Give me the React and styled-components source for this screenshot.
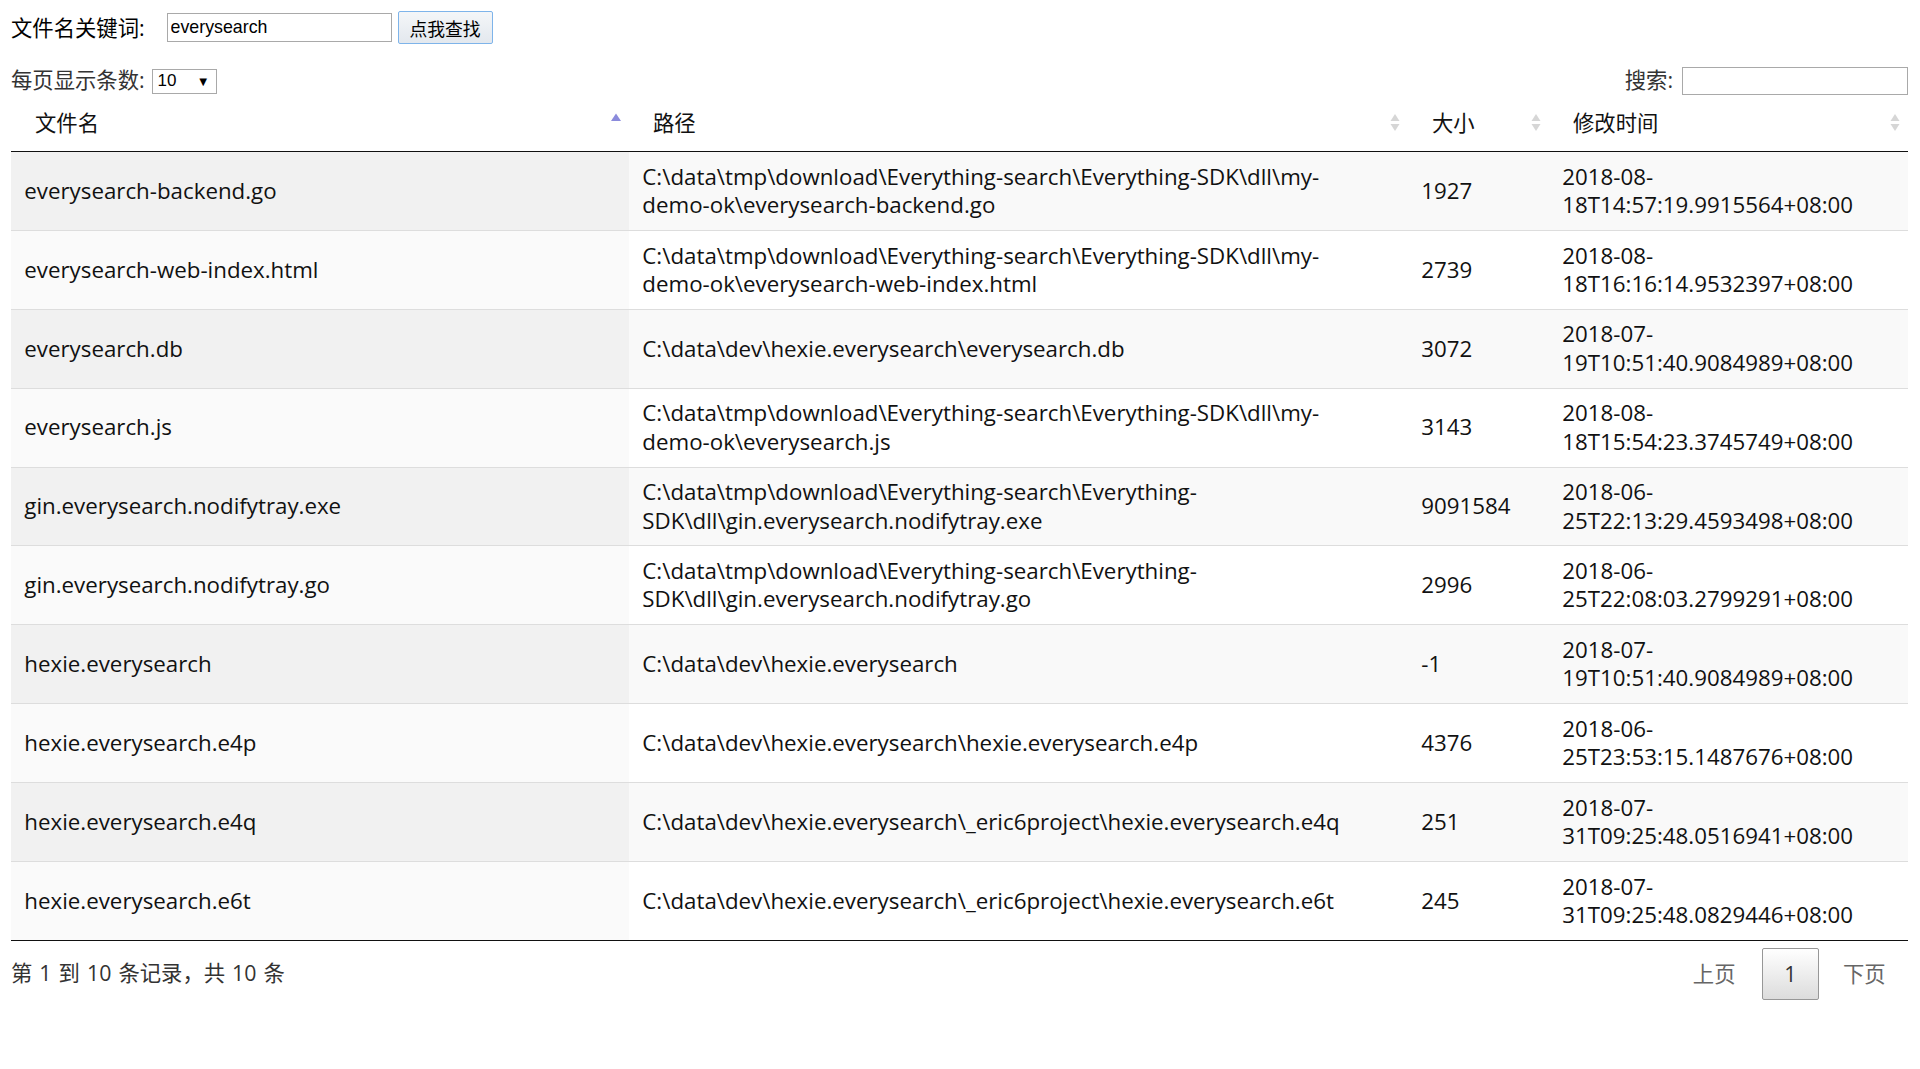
import React from "react";
import styled, { createGlobalStyle } from "styled-components";

const GlobalStyle = createGlobalStyle`
  body {
    margin: 0;
    background: #fff;
    font-family: "Open Sans", "Noto Sans CJK SC", sans-serif;
    color: #000;
  }
`;

const Page = styled.div`
  padding: 11px 12px 0 11px;
  font-size: 21.33px;
`;

const SearchBar = styled.form`
  display: flex;
  align-items: center;
  height: 33px;
`;

const Label = styled.span`
  line-height: 28px;
  color: #000;
`;

const KeywordInput = styled.input`
  box-sizing: border-box;
  width: 225px;
  height: 29px;
  margin-left: 22px;
  padding: 1px 3px;
  border: 1px solid #a9a9a9;
  font-family: "Liberation Sans", Arial, sans-serif;
  font-size: 17.8px;
  color: #000;
  outline: none;
`;

const FindButton = styled.button`
  box-sizing: border-box;
  width: 95px;
  height: 33px;
  margin-left: 6px;
  border: 1px solid #7eb4ea;
  border-radius: 2px;
  background: linear-gradient(#f4f6f8, #e3e8ee);
  font-family: "Noto Sans CJK SC", sans-serif;
  font-size: 17.8px;
  color: #000;
  padding: 0;
`;

const Toolbar = styled.div`
  display: flex;
  justify-content: space-between;
  align-items: center;
  height: 30px;
  margin-top: 22px;
  color: #333;
`;

const Group = styled.label`
  display: flex;
  align-items: center;
`;

const Caption = styled.span`
  padding-bottom: 5px;
`;

const LengthSelect = styled.div`
  box-sizing: border-box;
  display: flex;
  align-items: center;
  justify-content: space-between;
  width: 65px;
  height: 25px;
  margin-left: 7px;
  padding: 0 6px 0 5px;
  border: 1px solid #a9a9a9;
  font-family: "Liberation Sans", Arial, sans-serif;
  font-size: 17px;
  color: #000;

  span:last-child {
    font-size: 13px;
  }
`;

const FilterInput = styled.input`
  box-sizing: border-box;
  width: 226px;
  height: 28px;
  margin-left: 9px;
  border: 1px solid #a9a9a9;
  outline: none;
`;

const Table = styled.table`
  width: 100%;
  border-collapse: separate;
  border-spacing: 0;
  table-layout: fixed;
`;

const Th = styled.th`
  padding: 13.33px 6px 13.33px 24px;
  border-bottom: 1px solid #111;
  font-weight: normal;
  text-align: left;
  line-height: 28.3px;
  color: #111;
`;

const HeadInner = styled.div`
  display: flex;
  align-items: center;
  justify-content: space-between;
`;

const Td = styled.td`
  padding: 10.67px 13.33px;
  border-top: ${(p) => (p.first ? "none" : "1px solid #ddd")};
  font-size: 22.3px;
  line-height: 28.3px;
  color: #111;
  white-space: nowrap;
  vertical-align: middle;
  background: ${(p) =>
    p.sorted ? (p.odd ? "#f1f1f1" : "#fafafa") : p.odd ? "#f9f9f9" : "#fff"};
`;

const Line = styled.div`
  white-space: nowrap;
`;

const Footer = styled.div`
  display: flex;
  justify-content: space-between;
  align-items: flex-start;
  border-top: 1px solid #111;
  color: #333;
`;

const Info = styled.div`
  padding-top: 18px;
  line-height: 28.3px;
  word-spacing: 1.5px;
`;

const Paging = styled.div`
  display: flex;
  padding-top: 7px;
`;

const PageButton = styled.span`
  box-sizing: border-box;
  margin-left: ${(p) => (p.current ? "4px" : "2px")};
  padding: 10.67px 21.33px;
  min-width: 32px;
  border: 1px solid ${(p) => (p.current ? "#979797" : "transparent")};
  border-radius: 2px;
  line-height: 28.3px;
  text-align: center;
  color: ${(p) => (p.current ? "#333" : "#666")};
  background: ${(p) =>
    p.current ? "linear-gradient(#fff 0%, #dcdcdc 100%)" : "transparent"};
`;

const SortIcon = ({ asc }) => (
  <svg width="14" height="22" viewBox="0 0 14 22">
    {asc ? (
      <path d="M2 9 L7 1.5 L12 9 Z" fill="#8b8bdc" />
    ) : (
      <>
        <path d="M2.5 9 L7 2 L11.5 9 Z" fill="#d6d6d6" />
        <path d="M2.5 12 L7 19 L11.5 12 Z" fill="#d6d6d6" />
      </>
    )}
  </svg>
);

const columns = [
  { title: "文件名", width: 618, asc: true },
  { title: "路径", width: 779 },
  { title: "大小", width: 141 },
  { title: "修改时间", width: 359 },
];

const base = "C:\\data\\tmp\\download\\Everything-search\\";

const rows = [
  ["everysearch-backend.go", [base + "Everything-SDK\\dll\\my-", "demo-ok\\everysearch-backend.go"], "1927", ["2018-08-", "18T14:57:19.9915564+08:00"]],
  ["everysearch-web-index.html", [base + "Everything-SDK\\dll\\my-", "demo-ok\\everysearch-web-index.html"], "2739", ["2018-08-", "18T16:16:14.9532397+08:00"]],
  ["everysearch.db", ["C:\\data\\dev\\hexie.everysearch\\everysearch.db"], "3072", ["2018-07-", "19T10:51:40.9084989+08:00"]],
  ["everysearch.js", [base + "Everything-SDK\\dll\\my-", "demo-ok\\everysearch.js"], "3143", ["2018-08-", "18T15:54:23.3745749+08:00"]],
  ["gin.everysearch.nodifytray.exe", [base + "Everything-", "SDK\\dll\\gin.everysearch.nodifytray.exe"], "9091584", ["2018-06-", "25T22:13:29.4593498+08:00"]],
  ["gin.everysearch.nodifytray.go", [base + "Everything-", "SDK\\dll\\gin.everysearch.nodifytray.go"], "2996", ["2018-06-", "25T22:08:03.2799291+08:00"]],
  ["hexie.everysearch", ["C:\\data\\dev\\hexie.everysearch"], "-1", ["2018-07-", "19T10:51:40.9084989+08:00"]],
  ["hexie.everysearch.e4p", ["C:\\data\\dev\\hexie.everysearch\\hexie.everysearch.e4p"], "4376", ["2018-06-", "25T23:53:15.1487676+08:00"]],
  ["hexie.everysearch.e4q", ["C:\\data\\dev\\hexie.everysearch\\_eric6project\\hexie.everysearch.e4q"], "251", ["2018-07-", "31T09:25:48.0516941+08:00"]],
  ["hexie.everysearch.e6t", ["C:\\data\\dev\\hexie.everysearch\\_eric6project\\hexie.everysearch.e6t"], "245", ["2018-07-", "31T09:25:48.0829446+08:00"]],
];

const Lines = ({ items }) => items.map((t) => <Line key={t}>{t}</Line>);

export default function App() {
  return (
    <Page>
      <GlobalStyle />
      <SearchBar onSubmit={(e) => e.preventDefault()}>
        <Label>文件名关键词:</Label>
        <KeywordInput defaultValue="everysearch" />
        <FindButton type="submit">点我查找</FindButton>
      </SearchBar>

      <Toolbar>
        <Group>
          <Caption>每页显示条数:</Caption>
          <LengthSelect>
            <span>10</span>
            <span>▼</span>
          </LengthSelect>
        </Group>
        <Group>
          <Caption>搜索:</Caption>
          <FilterInput />
        </Group>
      </Toolbar>

      <Table>
        <colgroup>
          {columns.map((c) => (
            <col key={c.title} style={{ width: c.width }} />
          ))}
        </colgroup>
        <thead>
          <tr>
            {columns.map((c) => (
              <Th key={c.title}>
                <HeadInner>
                  <span>{c.title}</span>
                  <SortIcon asc={c.asc} />
                </HeadInner>
              </Th>
            ))}
          </tr>
        </thead>
        <tbody>
          {rows.map(([name, path, size, time], i) => {
            const odd = i % 2 === 0;
            return (
              <tr key={name}>
                <Td first={i === 0} odd={odd} sorted>{name}</Td>
                <Td first={i === 0} odd={odd}><Lines items={path} /></Td>
                <Td first={i === 0} odd={odd}>{size}</Td>
                <Td first={i === 0} odd={odd}><Lines items={time} /></Td>
              </tr>
            );
          })}
        </tbody>
      </Table>

      <Footer>
        <Info>第 1 到 10 条记录，共 10 条</Info>
        <Paging>
          <PageButton>上页</PageButton>
          <PageButton current>1</PageButton>
          <PageButton>下页</PageButton>
        </Paging>
      </Footer>
    </Page>
  );
}
